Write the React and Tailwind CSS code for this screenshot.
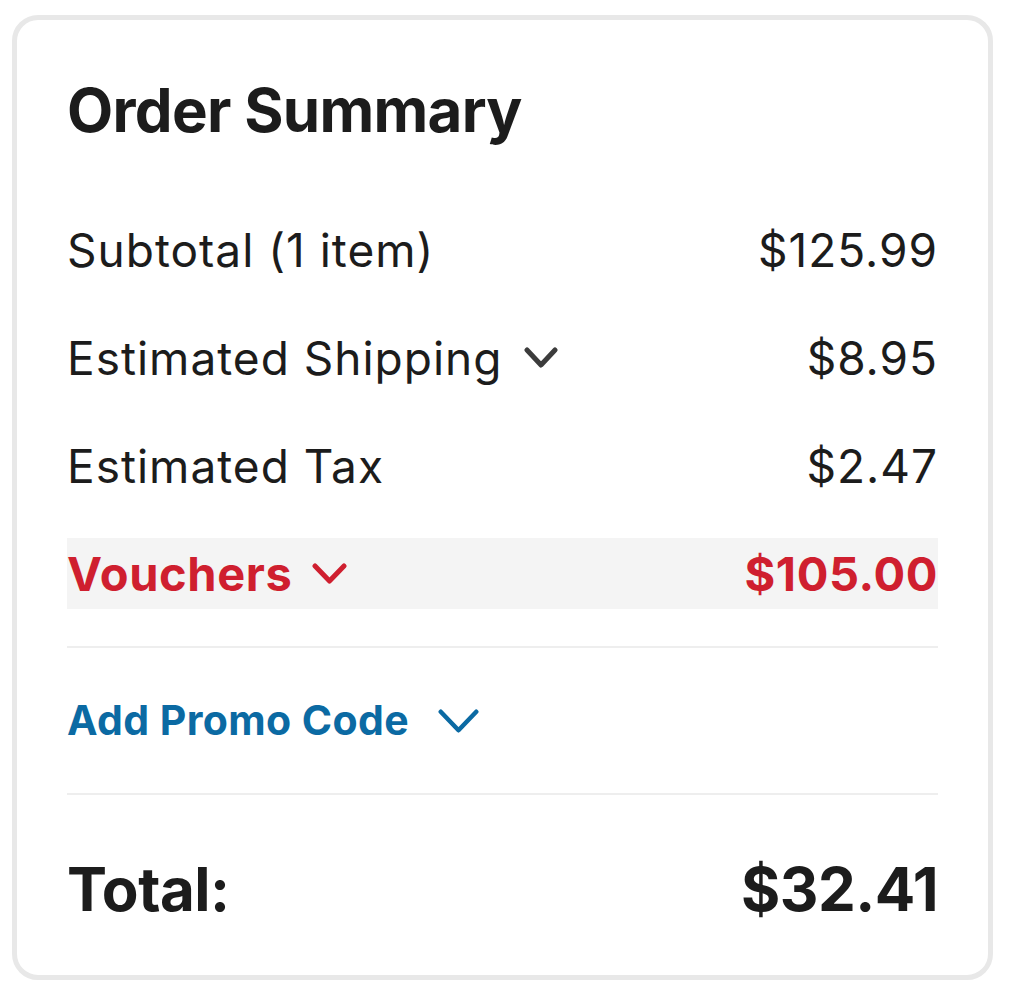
import React from "react";

function Chevron({ w, h, color, stroke = 4 }) {
  return (
    <svg width={w} height={h} viewBox={`0 0 ${w} ${h}`} fill="none">
      <polyline
        points={`${stroke / 2 + 0.5},${stroke / 2 + 0.5} ${w / 2},${h - stroke / 2 - 0.5} ${w - stroke / 2 - 0.5},${stroke / 2 + 0.5}`}
        stroke={color}
        strokeWidth={stroke}
        strokeLinecap="round"
        strokeLinejoin="round"
      />
    </svg>
  );
}

export default function App() {
  const font = { fontFamily: "Inter, 'Noto Sans', sans-serif" };
  return (
    <div className="min-h-[997px] w-[1017px] bg-white pt-[15px] pl-[12px]" style={font}>
      <div className="w-[981px] h-[965px] border-[5px] border-[#e8e8e8] rounded-[26px] px-[50px] pt-[60px] flex flex-col text-[#1c1c1c]">
        <div className="h-[60px] flex items-center">
          <h1 className="text-[60px] leading-none font-bold tracking-[-0.7px]">Order Summary</h1>
        </div>

        <div className="mt-[74px] flex flex-col gap-[37px]">
          <div className="h-[71px] flex items-center justify-between text-[46px] leading-none tracking-[1px]">
            <span>Subtotal (1 item)</span>
            <span>$125.99</span>
          </div>
          <div className="h-[71px] flex items-center justify-between text-[46px] leading-none tracking-[1px]">
            <span className="flex items-center gap-[22px]">
              Estimated Shipping
              <Chevron w={34} h={21} color="#3c3c3c" stroke={5} />
            </span>
            <span>$8.95</span>
          </div>
          <div className="h-[71px] flex items-center justify-between text-[46px] leading-none tracking-[1px]">
            <span>Estimated Tax</span>
            <span>$2.47</span>
          </div>
          <div className="h-[71px] flex items-center justify-between text-[47px] leading-none font-bold tracking-[0.6px] text-[#cf1f2f] bg-[#f4f4f4]">
            <span className="flex items-center gap-[20px]">
              Vouchers
              <Chevron w={35} h={21} color="#cf1f2f" stroke={5} />
            </span>
            <span>$105.00</span>
          </div>
        </div>

        <div className="mt-[37px] h-[2px] bg-[#eeeeee]" />

        <div className="mt-[37px] h-[71px] flex items-center">
          <span className="flex items-center gap-[29px] text-[41px] leading-none font-bold tracking-[0.4px] text-[#0b6aa3]">
            Add Promo Code
            <Chevron w={41} h={24} color="#0b6aa3" stroke={4.5} />
          </span>
        </div>

        <div className="mt-[37px] h-[2px] bg-[#eeeeee]" />

        <div className="mt-[58px] h-[71px] flex items-center justify-between text-[60px] leading-none font-bold tracking-[-0.5px]">
          <span>Total:</span>
          <span>$32.41</span>
        </div>
      </div>
    </div>
  );
}
